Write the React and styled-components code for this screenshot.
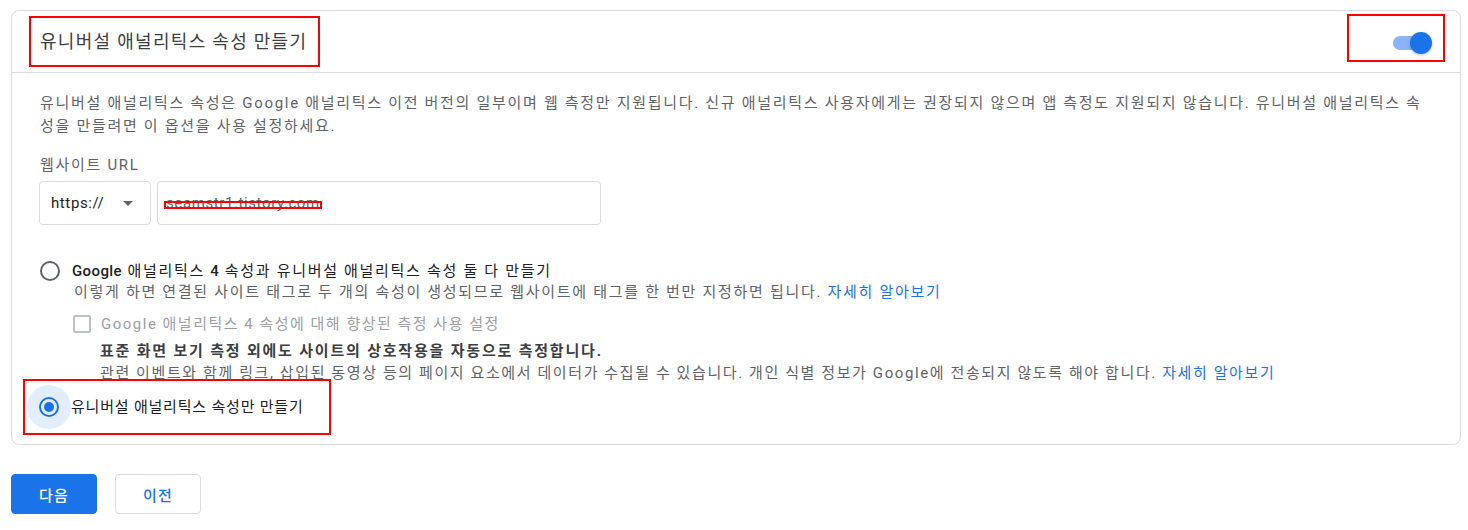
import React, {useState} from 'react';
import styled, {createGlobalStyle} from 'styled-components';

const GlobalStyle = createGlobalStyle`
  body {
    margin: 0;
    background: #fff;
    font-family: Roboto, "Noto Sans CJK KR", sans-serif;
  }
`;

const Page = styled.div`
  padding: 10px 7px 0 11px;
`;

const Card = styled.div`
  border: 1px solid #dadce0;
  border-radius: 8px;
`;

const Header = styled.div`
  display: flex;
  justify-content: space-between;
  align-items: flex-start;
  height: 62px;
  box-sizing: border-box;
  padding: 5px 15px 0 17px;
  border-bottom: 1px solid #dadce0;
`;

// 빨간 표시 박스
const Marked = styled.div`
  border: 2px solid #ff0000;
  box-sizing: border-box;
`;

const TitleBox = styled(Marked)`
  padding: 11px 11px 11px 9px;
  font-size: 18px;
  letter-spacing: 1.3px;
  line-height: 25px;
  color: #3c4043;
`;

const ToggleBox = styled(Marked)`
  margin-top: -2px;
  width: 98px;
  height: 48px;
  display: flex;
  justify-content: flex-end;
  padding: 16px 11px 0 0;
`;

const Switch = styled.div`
  position: relative;
  width: 39px;
  height: 22px;
  cursor: pointer;
`;

const Track = styled.div`
  margin-top: 4px;
  width: 36px;
  height: 14px;
  border-radius: 7px;
  background: ${p => (p.on ? '#8ab4f8' : '#bdc1c6')};
`;

const Knob = styled.div`
  position: absolute;
  top: 0;
  left: ${p => (p.on ? '17px' : '0')};
  width: 22px;
  height: 22px;
  border-radius: 50%;
  background: ${p => (p.on ? '#1a73e8' : '#fff')};
  box-shadow: 0 1px 3px rgba(60, 64, 67, 0.35);
`;

const Body = styled.div`
  padding: 19px 28px 9px 28px;
  font-size: 15px;
  letter-spacing: 1.7px;
  color: #5f6368;
`;

const Desc = styled.p`
  margin: 0;
  line-height: 23px;
`;

const Label = styled.div`
  margin-top: 17px;
  line-height: 20px;
`;

const UrlRow = styled.div`
  display: flex;
  gap: 6px;
  margin-top: 6px;
  margin-left: -1px;
`;

const Field = styled.div`
  height: 44px;
  box-sizing: border-box;
  border: 1px solid #dadce0;
  border-radius: 4px;
  display: flex;
  align-items: center;
  color: #202124;
  font-size: 15px;
  letter-spacing: 0.6px;
`;

const Select = styled(Field)`
  width: 112px;
  padding: 0 17px 0 11px;
  justify-content: space-between;
`;

const Caret = styled.span`
  width: 0;
  height: 0;
  border-left: 5px solid transparent;
  border-right: 5px solid transparent;
  border-top: 5px solid #5f6368;
`;

const UrlInput = styled(Field)`
  width: 444px;
  padding-left: 8px;
`;

const Redacted = styled.span`
  position: relative;
  color: #5f6368;
  font-size: 15px;
  &::after {
    content: '';
    position: absolute;
    left: -2px;
    right: -2px;
    top: 7px;
    height: 8px;
    border: 2px solid #ff0000;
    box-sizing: border-box;
  }
`;

const Option = styled.div`
  display: flex;
  align-items: center;
  gap: 12px;
  line-height: 20px;
  color: #202124;
  margin-top: ${p => p.mt || 0}px;
`;

const SelectedOption = styled(Marked)`
  display: inline-flex;
  align-items: center;
  gap: 12px;
  margin: -5px 0 0 -17px;
  padding: 16px 25px 16px 14px;
  line-height: 20px;
  letter-spacing: 0.8px;
  color: #202124;
`;

const Radio = styled.span`
  position: relative;
  flex: none;
  width: 20px;
  height: 20px;
  box-sizing: border-box;
  border-radius: 50%;
  border: 2px solid ${p => (p.checked ? '#1a73e8' : '#5f6368')};
  display: flex;
  align-items: center;
  justify-content: center;
  &::before {
    content: '';
    display: ${p => (p.checked ? 'block' : 'none')};
    position: absolute;
    left: -14px;
    top: -14px;
    width: 44px;
    height: 44px;
    border-radius: 50%;
    background: rgba(26, 115, 232, 0.12);
  }
  &::after {
    content: '';
    display: ${p => (p.checked ? 'block' : 'none')};
    width: 10px;
    height: 10px;
    border-radius: 50%;
    background: #1a73e8;
  }
`;

const Strong = styled.span`
  font-weight: 500;
  letter-spacing: 0.4px;
`;

const Sub = styled.div`
  line-height: 22px;
  padding-left: ${p => p.indent}px;
  color: ${p => p.color || '#5f6368'};
  font-weight: ${p => (p.bold ? 700 : 400)};
  letter-spacing: ${p => p.spacing || 1.7}px;
`;

const Link = styled.a`
  color: #1a73e8;
  text-decoration: none;
`;

const CheckRow = styled.div`
  display: flex;
  align-items: center;
  gap: 10px;
  margin: 11px 0 6px 33px;
  line-height: 20px;
  letter-spacing: 1.5px;
  color: #9aa0a6;
`;

const Checkbox = styled.span`
  width: 18px;
  height: 18px;
  box-sizing: border-box;
  border: 2px solid #bdc1c6;
  border-radius: 2px;
`;

const Buttons = styled.div`
  display: flex;
  gap: 18px;
  margin-top: 29px;
`;

const Button = styled.button`
  width: 86px;
  height: 40px;
  border-radius: 4px;
  font-family: Roboto, "Noto Sans CJK KR", sans-serif;
  font-size: 15px;
  letter-spacing: 1.2px;
  font-weight: 500;
  cursor: pointer;
  border: 1px solid ${p => (p.primary ? '#1a73e8' : '#dadce0')};
  background: ${p => (p.primary ? '#1a73e8' : '#fff')};
  color: ${p => (p.primary ? '#fff' : '#1a73e8')};
`;

export default function App() {
  const [on, setOn] = useState(true);

  return (
    <Page>
      <GlobalStyle />
      <Card>
        <Header>
          <TitleBox>유니버설 애널리틱스 속성 만들기</TitleBox>
          <ToggleBox>
            <Switch onClick={() => setOn(!on)}>
              <Track on={on} />
              <Knob on={on} />
            </Switch>
          </ToggleBox>
        </Header>
        <Body>
          <Desc>
            유니버설 애널리틱스 속성은 Google 애널리틱스 이전 버전의 일부이며 웹 측정만 지원됩니다. 신규 애널리틱스 사용자에게는 권장되지 않으며 앱 측정도 지원되지 않습니다. 유니버설 애널리틱스 속성을 만들려면 이 옵션을 사용 설정하세요.
          </Desc>
          <Label>웹사이트 URL</Label>
          <UrlRow>
            <Select>
              https://
              <Caret />
            </Select>
            <UrlInput>
              <Redacted>seamstr1.tistory.com</Redacted>
            </UrlInput>
          </UrlRow>

          <Option mt={36}>
            <Radio />
            <span>
              <Strong>Google</Strong> 애널리틱스 <Strong>4</Strong> 속성과 유니버설 애널리틱스 속성 둘 다 만들기
            </span>
          </Option>
          <Sub indent={34}>
            이렇게 하면 연결된 사이트 태그로 두 개의 속성이 생성되므로 웹사이트에 태그를 한 번만 지정하면 됩니다. <Link href="#">자세히 알아보기</Link>
          </Sub>
          <CheckRow>
            <Checkbox />
            Google 애널리틱스 4 속성에 대해 향상된 측정 사용 설정
          </CheckRow>
          <Sub indent={60} bold color="#3c4043" spacing={1.8}>
            표준 화면 보기 측정 외에도 사이트의 상호작용을 자동으로 측정합니다.
          </Sub>
          <Sub indent={60} spacing={1.6}>
            관련 이벤트와 함께 링크, 삽입된 동영상 등의 페이지 요소에서 데이터가 수집될 수 있습니다. 개인 식별 정보가 Google에 전송되지 않도록 해야 합니다. <Link href="#">자세히 알아보기</Link>
          </Sub>
          <SelectedOption>
            <Radio checked />
            유니버설 애널리틱스 속성만 만들기
          </SelectedOption>
        </Body>
      </Card>
      <Buttons>
        <Button primary>다음</Button>
        <Button>이전</Button>
      </Buttons>
    </Page>
  );
}
